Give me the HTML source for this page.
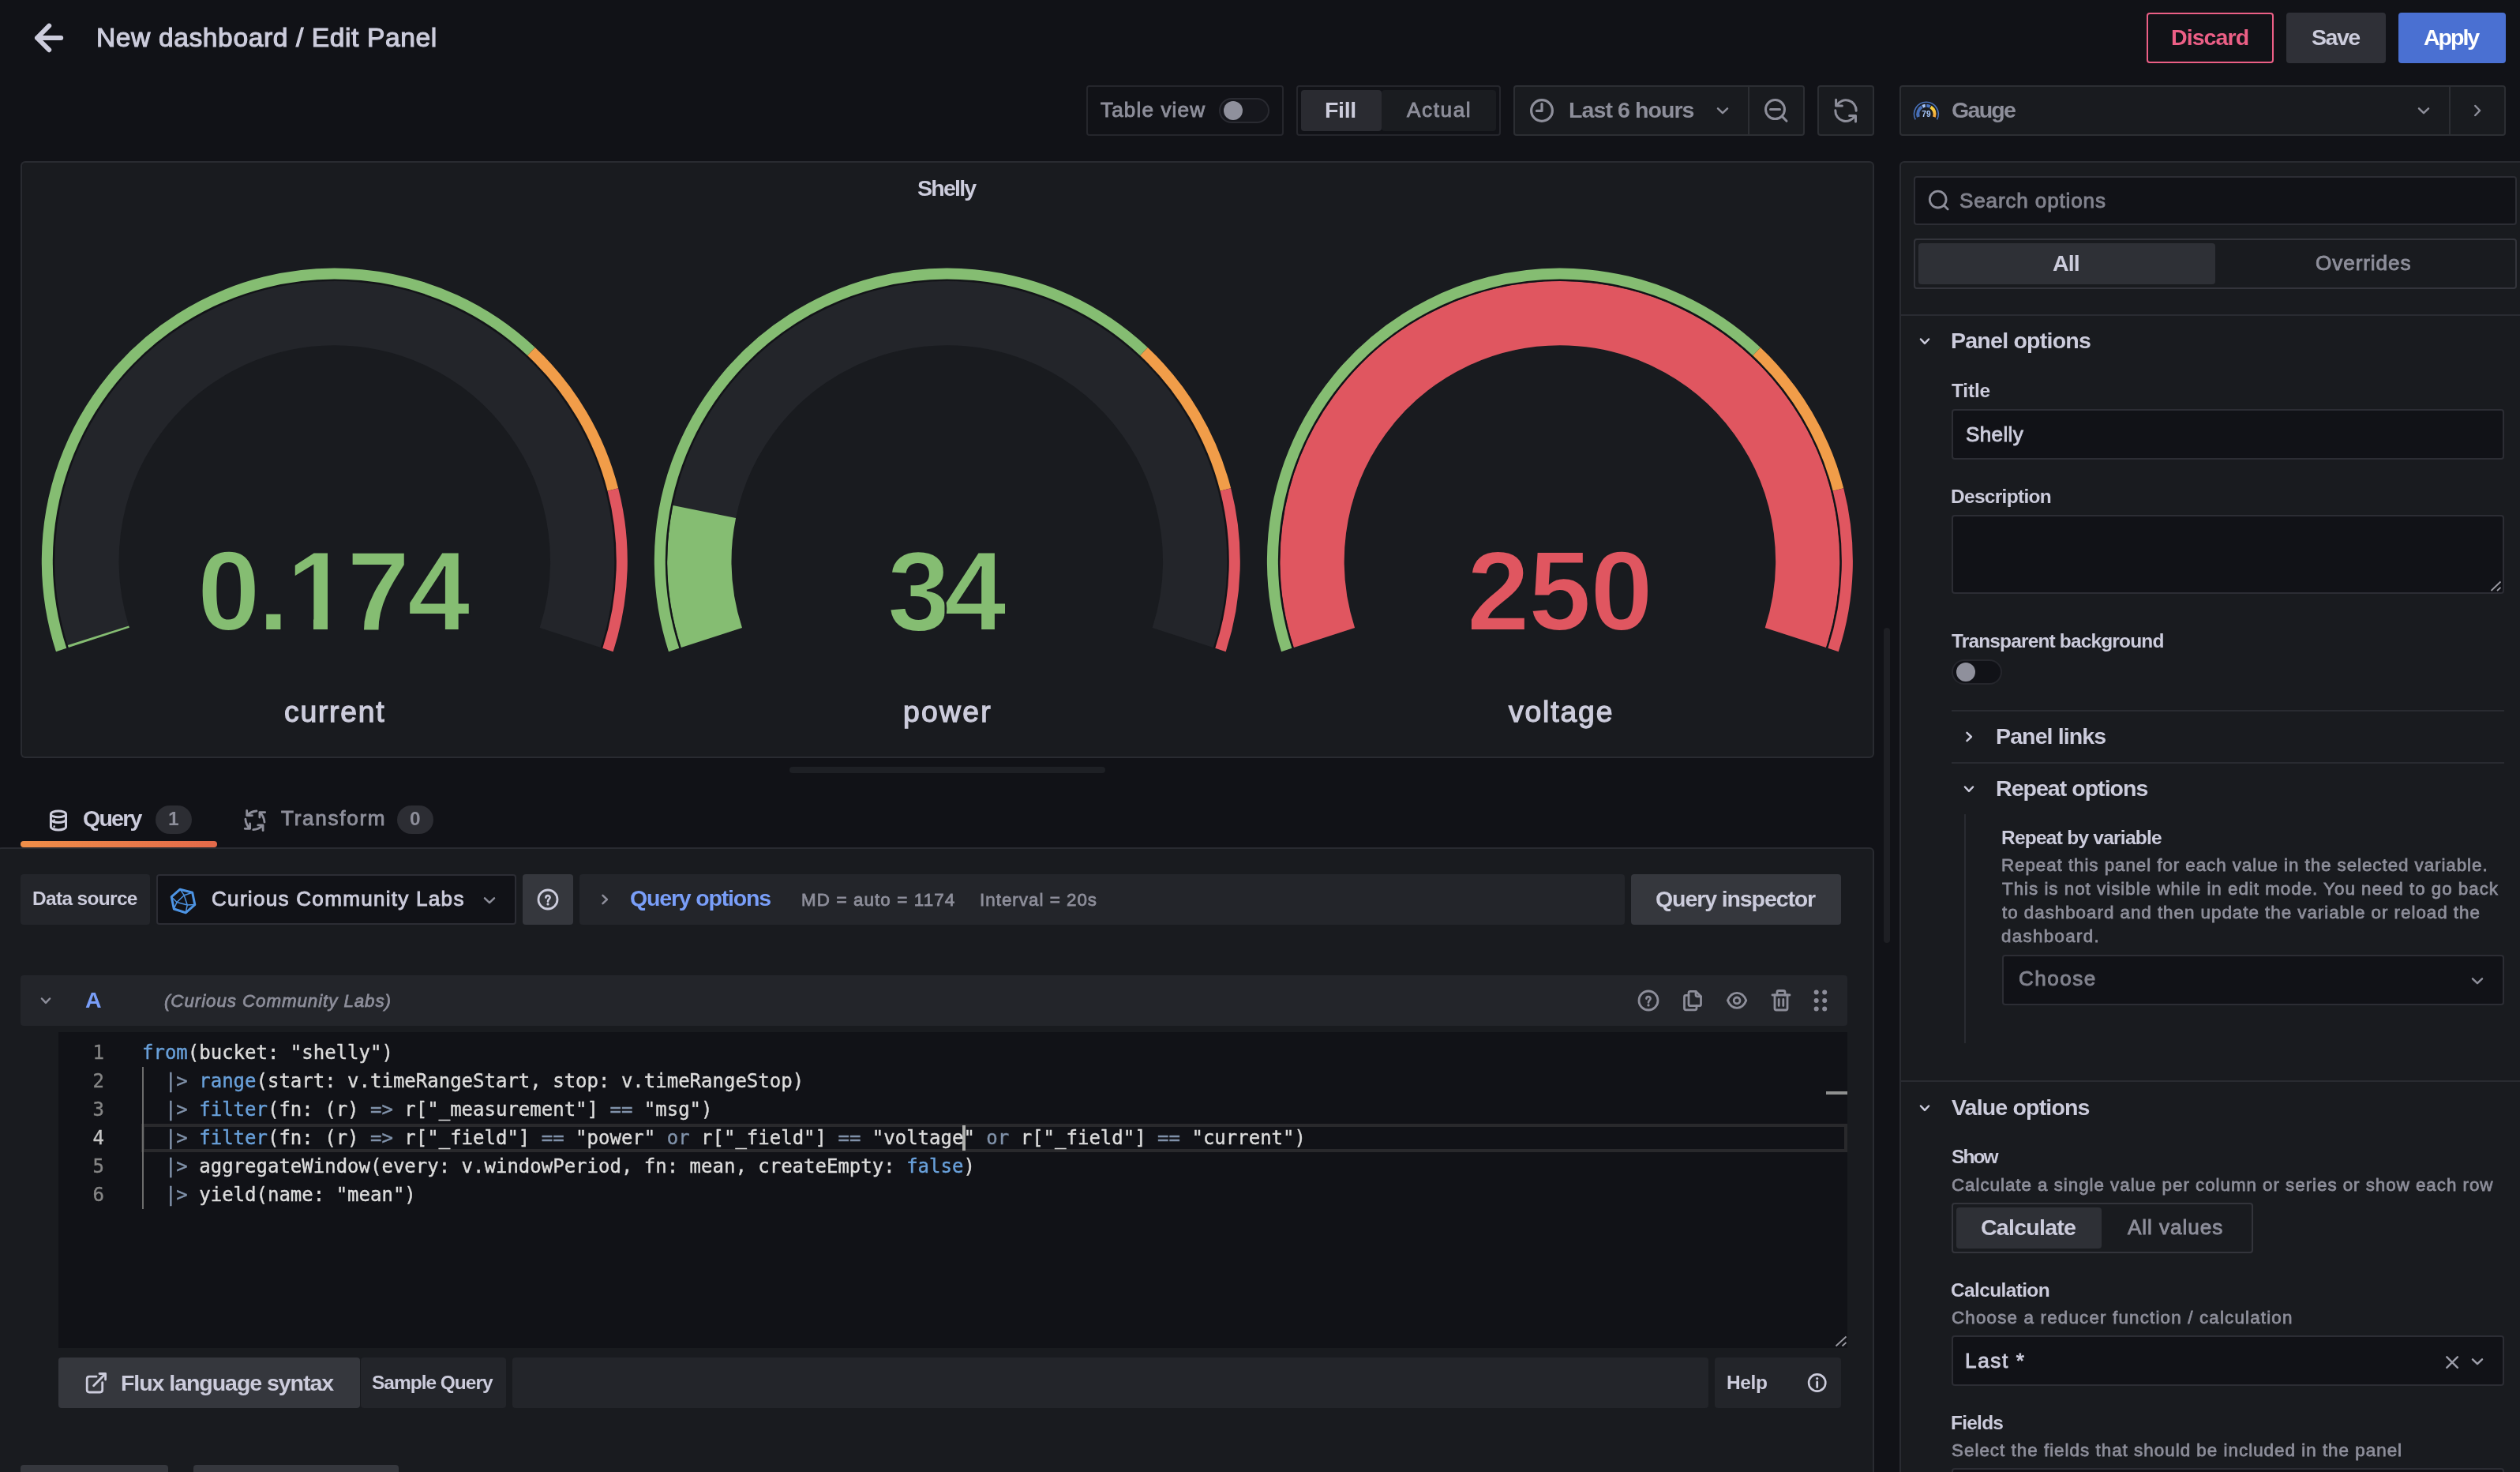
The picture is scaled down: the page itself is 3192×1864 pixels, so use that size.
<!DOCTYPE html>
<html lang="en"><head><meta charset="utf-8"><title>Edit Panel - New dashboard - Grafana</title><style>
html,body{margin:0;padding:0;}
body{width:3192px;height:1864px;overflow:hidden;background:#111217;position:relative;font-family:'Liberation Sans',Arial,sans-serif;color:#ccccdc;}
.b{position:absolute;box-sizing:border-box;}
.t{position:absolute;white-space:pre;will-change:transform;}
svg{will-change:transform;}
</style></head>
<body>
<header class="page-toolbar">
<svg class="b" style="left:36px;top:24px;" width="52" height="48" viewBox="36 24 52 48" fill="none"><path d="M62.2 32.7 L47 48 L62.2 63.2 M47 48 H77.2" stroke="#ccccdc" stroke-width="6" stroke-linecap="round" stroke-linejoin="round"/></svg>
<div class="b" style="left:2719px;top:16px;width:161px;height:64px;border:2px solid #ec5f86;border-radius:4px;"></div>
<div class="b" style="left:2896px;top:16px;width:126px;height:64px;background:#2f3037;border-radius:4px;"></div>
<div class="b" style="left:3038px;top:16px;width:136px;height:64px;background:#4a70d2;border-radius:4px;"></div>
<div class="b" style="left:1376px;top:108px;width:250px;height:64px;border:2px solid rgba(204,204,220,0.11);border-radius:4px;"></div>
<div class="b" style="left:1544px;top:124px;width:64px;height:32px;background:rgba(204,204,220,0.03);border:2px solid rgba(204,204,220,0.11);border-radius:16px;"></div>
<div class="b" style="left:1550px;top:128px;width:24px;height:24px;background:#8f909c;border-radius:12px;"></div>
<div class="b" style="left:1642px;top:108px;width:259px;height:64px;border:2px solid rgba(204,204,220,0.11);border-radius:4px;"></div>
<div class="b" style="left:1648px;top:114px;width:102px;height:52px;background:#2a2b31;border-radius:4px;"></div>
<div class="b" style="left:1750px;top:114px;width:145px;height:52px;background:#1a1c20;border-radius:4px;"></div>
<div class="b" style="left:1917px;top:108px;width:369px;height:64px;background:#191b1f;border:2px solid rgba(204,204,220,0.11);border-radius:4px;"></div>
<div class="b" style="left:2214px;top:110px;width:2px;height:60px;background:rgba(204,204,220,0.11);"></div>
<svg class="b" style="left:1936px;top:124px;" width="34" height="34" viewBox="1936 124 34 34" fill="none"><circle cx="1953" cy="140" r="13.4" stroke="#8d8e9a" stroke-width="3.2"/><path d="M1953 131.5 V140.4 H1946.4" stroke="#8d8e9a" stroke-width="3.2" stroke-linecap="round" stroke-linejoin="round"/></svg>
<svg class="b" style="left:2170px;top:128px;" width="24" height="24" viewBox="0 0 24 24" fill="none"><path d="M6.0 9.299999999999999 L12 15.1 L18.0 9.299999999999999" stroke="#8d8e9a" stroke-width="2.5" stroke-linecap="round" stroke-linejoin="round"/></svg>
<svg class="b" style="left:2230px;top:120px;" width="40" height="40" viewBox="2230 120 40 40" fill="none"><circle cx="2248.5" cy="138.6" r="12" stroke="#8d8e9a" stroke-width="3"/><path d="M2242.5 138.6 H2254.5 M2257.3 147.4 L2263 153.2" stroke="#8d8e9a" stroke-width="3" stroke-linecap="round"/></svg>
<div class="b" style="left:2302px;top:108px;width:72px;height:64px;background:#191b1f;border:2px solid rgba(204,204,220,0.11);border-radius:4px;"></div>
<svg class="b" style="left:2318px;top:120px;" width="40" height="40" viewBox="2318 120 40 40" fill="none"><g stroke="#8d8e9a" stroke-width="3" stroke-linecap="round" stroke-linejoin="round"><path d="M2326.5 133.5 A13.2 13.2 0 0 1 2351.2 140.3"/><path d="M2325.6 126.3 V134 H2333.4"/><path d="M2349.6 146.6 A13.2 13.2 0 0 1 2324.8 139.8"/><path d="M2350.5 154 V146.4 H2342.6"/></g></svg>
<div class="b" style="left:2406px;top:108px;width:768px;height:64px;background:#191b1f;border:2px solid rgba(204,204,220,0.11);border-radius:4px;"></div>
<div class="b" style="left:3102px;top:110px;width:2px;height:60px;background:rgba(204,204,220,0.11);"></div>
<svg class="b" style="left:3058px;top:128px;" width="24" height="24" viewBox="0 0 24 24" fill="none"><path d="M6.0 9.299999999999999 L12 15.1 L18.0 9.299999999999999" stroke="#8d8e9a" stroke-width="2.5" stroke-linecap="round" stroke-linejoin="round"/></svg>
<svg class="b" style="left:3126px;top:128px;" width="24" height="24" viewBox="0 0 24 24" fill="none"><path d="M9.299999999999999 6.0 L15.1 12 L9.299999999999999 18.0" stroke="#8d8e9a" stroke-width="2.5" stroke-linecap="round" stroke-linejoin="round"/></svg>
<svg class="b" style="left:2420px;top:124px;" width="40" height="32" viewBox="2420 124 40 32" fill="none"><defs><linearGradient id="gy" x1="0" y1="0" x2="0" y2="1"><stop offset="0" stop-color="#f8d640"/><stop offset="1" stop-color="#f5a33e"/></linearGradient></defs><g fill="none"><path d="M2426.27 151.45 A15.3 15.3 0 1 1 2453.53 151.45" stroke="#4870b8" stroke-width="1.6" /><path d="M2429.85 148.16 A10.7 10.7 0 0 1 2434.39 135.33" stroke="#476fb7" stroke-width="4" /><path d="M2435.21 134.88 A10.7 10.7 0 0 1 2438.78 133.86" stroke="#a4c5fb" stroke-width="4" /><path d="M2440.27 133.81 A10.7 10.7 0 0 1 2444.76 134.97" stroke="#4a74c0" stroke-width="4" /><path d="M2445.57 135.43 A10.7 10.7 0 0 1 2449.95 148.16" stroke="url(#gy)" stroke-width="4" /></g><text x="2439.9" y="148.3" font-size="10.2" font-weight="bold" fill="#a9c9fc" text-anchor="middle" font-family="Liberation Sans, sans-serif">79</text></svg>
<div class="t" style="left:121.65px;top:24.09px;font-size:33.59px;line-height:47px;color:#ccccdc;-webkit-text-stroke:1.14px #ccccdc;letter-spacing:0.600px;">New dashboard / Edit Panel</div>
<div class="t" style="left:2750.21px;top:27.40px;font-size:28.56px;line-height:40px;color:#ec5f86;font-weight:bold;letter-spacing:-0.943px;">Discard</div>
<div class="t" style="left:2928.25px;top:27.40px;font-size:28.56px;line-height:40px;color:#ccccdc;font-weight:bold;letter-spacing:-1.481px;">Save</div>
<div class="t" style="left:3069.55px;top:27.40px;font-size:28.56px;line-height:40px;color:#ffffff;font-weight:bold;letter-spacing:-2.017px;">Apply</div>
<div class="t" style="left:1393.84px;top:120.71px;font-size:26.12px;line-height:37px;color:#8d8e9a;-webkit-text-stroke:0.89px #8d8e9a;letter-spacing:1.128px;">Table view</div>
<div class="t" style="left:1678.21px;top:118.80px;font-size:28.56px;line-height:40px;color:#ccccdc;font-weight:bold;letter-spacing:-0.359px;">Fill</div>
<div class="t" style="left:1782.44px;top:120.71px;font-size:26.12px;line-height:37px;color:#8d8e9a;-webkit-text-stroke:0.89px #8d8e9a;letter-spacing:1.608px;">Actual</div>
<div class="t" style="left:1986.61px;top:119.00px;font-size:28.56px;line-height:40px;color:#8d8e9a;font-weight:bold;letter-spacing:-0.934px;">Last 6 hours</div>
<div class="t" style="left:2472.21px;top:118.90px;font-size:28.56px;line-height:40px;color:#8d8e9a;font-weight:bold;letter-spacing:-1.717px;">Gauge</div>
</header>
<main class="panel-container">
<div class="b" style="left:26px;top:204px;width:2348px;height:756px;background:#191b1f;border:2px solid rgba(204,204,220,0.095);border-radius:6px;"></div>
<svg class="b" style="left:29px;top:206px;" width="2342" height="751" viewBox="29 206 2342 751" fill="none"><path d="M125.36 807.47 A313.79999999999995 313.79999999999995 0 1 1 722.24 807.47" stroke="#23252a" stroke-width="81.19999999999999" fill="none"/><path d="M125.36 807.47 A313.79999999999995 313.79999999999995 0 0 1 124.49 804.77" stroke="#85bd72" stroke-width="81.19999999999999" fill="none"/><path d="M85.51 820.42 A355.7 355.7 0 1 1 762.09 820.42" stroke="#131418" stroke-width="2.0" fill="none"/><path d="M77.62 822.98 A364.0 364.0 0 0 1 672.98 445.16" stroke="#85bd72" stroke-width="14" fill="none"/><path d="M672.98 445.16 A364.0 364.0 0 0 1 776.36 619.98" stroke="#f19d49" stroke-width="14" fill="none"/><path d="M776.36 619.98 A364.0 364.0 0 0 1 769.98 822.98" stroke="#e05660" stroke-width="14" fill="none"/><path d="M901.36 807.47 A313.79999999999995 313.79999999999995 0 1 1 1498.24 807.47" stroke="#23252a" stroke-width="81.19999999999999" fill="none"/><path d="M901.36 807.47 A313.79999999999995 313.79999999999995 0 0 1 892.28 648.02" stroke="#85bd72" stroke-width="81.19999999999999" fill="none"/><path d="M861.51 820.42 A355.7 355.7 0 1 1 1538.09 820.42" stroke="#131418" stroke-width="2.0" fill="none"/><path d="M853.62 822.98 A364.0 364.0 0 0 1 1448.98 445.16" stroke="#85bd72" stroke-width="14" fill="none"/><path d="M1448.98 445.16 A364.0 364.0 0 0 1 1552.36 619.98" stroke="#f19d49" stroke-width="14" fill="none"/><path d="M1552.36 619.98 A364.0 364.0 0 0 1 1545.98 822.98" stroke="#e05660" stroke-width="14" fill="none"/><path d="M1677.46 807.47 A313.79999999999995 313.79999999999995 0 1 1 2274.34 807.47" stroke="#23252a" stroke-width="81.19999999999999" fill="none"/><path d="M1677.46 807.47 A313.79999999999995 313.79999999999995 0 1 1 2274.34 807.47" stroke="#e05660" stroke-width="81.19999999999999" fill="none"/><path d="M1637.61 820.42 A355.7 355.7 0 1 1 2314.19 820.42" stroke="#131418" stroke-width="2.0" fill="none"/><path d="M1629.72 822.98 A364.0 364.0 0 0 1 2225.08 445.16" stroke="#85bd72" stroke-width="14" fill="none"/><path d="M2225.08 445.16 A364.0 364.0 0 0 1 2328.46 619.98" stroke="#f19d49" stroke-width="14" fill="none"/><path d="M2328.46 619.98 A364.0 364.0 0 0 1 2322.08 822.98" stroke="#e05660" stroke-width="14" fill="none"/></svg>
<div class="t" style="left:1161.85px;top:217.60px;font-size:28.56px;line-height:40px;color:#ccccdc;font-weight:bold;letter-spacing:-1.773px;">Shelly</div>
<div class="t" style="left:249.93px;top:648.65px;font-size:143px;line-height:200px;color:#85bd72;font-weight:bold;-webkit-text-stroke:2px #191b1f;letter-spacing:-3.072px;">0.174</div>
<div class="t" style="left:1123.97px;top:648.65px;font-size:143px;line-height:200px;color:#85bd72;font-weight:bold;-webkit-text-stroke:2px #191b1f;letter-spacing:-8.233px;">34</div>
<div class="t" style="left:1857.93px;top:648.65px;font-size:143px;line-height:200px;color:#e05660;font-weight:bold;-webkit-text-stroke:2px #191b1f;letter-spacing:-1.463px;">250</div>
<div class="t" style="left:360.17px;top:875.43px;font-size:37.32px;line-height:52px;color:#ccccdc;-webkit-text-stroke:1.27px #ccccdc;letter-spacing:1.736px;">current</div>
<div class="t" style="left:1143.70px;top:875.43px;font-size:37.32px;line-height:52px;color:#ccccdc;-webkit-text-stroke:1.27px #ccccdc;letter-spacing:2.275px;">power</div>
<div class="t" style="left:1910.93px;top:875.43px;font-size:37.32px;line-height:52px;color:#ccccdc;-webkit-text-stroke:1.27px #ccccdc;letter-spacing:1.850px;">voltage</div>
<div class="b" style="left:369px;top:782px;width:28.4px;height:18px;background:#191b1f"></div>
<div class="b" style="left:415px;top:782px;width:26px;height:18px;background:#191b1f"></div>
</main>
<div class="splitters">
<div class="b" style="left:1000px;top:971px;width:400px;height:8px;background:#1e2025;border-radius:4px;"></div>
<div class="b" style="left:2386px;top:795px;width:8px;height:399px;background:#1e1f24;border-radius:4px;"></div>
</div>
<section class="query-editor">
<div class="b" style="left:-4px;top:1073px;width:2378px;height:900px;background:#191b1f;border:2px solid rgba(204,204,220,0.095);border-radius:6px;"></div>
<div class="b" style="left:26px;top:1065px;width:249px;height:8px;border-radius:4px;background:linear-gradient(90deg,#ef8e48,#e3694a);"></div>
<div class="b" style="left:197px;top:1020px;width:46px;height:36px;background:#2c2d33;border-radius:18px;"></div>
<div class="b" style="left:503px;top:1020px;width:46px;height:36px;background:#2c2d33;border-radius:18px;"></div>
<svg class="b" style="left:56px;top:1018px;" width="36" height="40" viewBox="56 1018 36 40" fill="none"><g stroke="#ccccdc" stroke-width="3" fill="none"><ellipse cx="73.97" cy="1030.9" rx="9.55" ry="3.9"/><path d="M64.42 1030.9 V1047 A9.55 3.9 0 0 0 83.52 1047 V1030.9"/><path d="M64.42 1037.6 A9.55 3.9 0 0 0 83.52 1037.6"/></g><circle cx="68.7" cy="1038.6" r="1.3" fill="#ccccdc"/><circle cx="68.7" cy="1046.6" r="1.3" fill="#ccccdc"/></svg>
<svg class="b" style="left:304px;top:1020px;" width="40" height="40" viewBox="304 1020 40 40" fill="none"><g stroke="#8d8e9a" stroke-width="2.8" fill="none" stroke-linecap="round" stroke-linejoin="round"><path d="M312.7 1026.5 V1032.7 H319.4 M313.5 1031.8 Q318 1027.6 325 1027"/><path d="M335.7 1028.6 H328.9 V1035 M329.8 1029.5 Q334.4 1034 335 1041.2"/><path d="M333.1 1051.7 V1044.9 H326.8 M332.4 1045.8 Q327.5 1050.2 320.7 1050.7"/><path d="M310.2 1049.3 H316.6 V1042.9 M315.8 1048.5 Q311.4 1043.8 310.9 1037.1"/></g></svg>
<div class="b" style="left:26px;top:1107px;width:164px;height:64px;background:#23252a;border-radius:4px;"></div>
<div class="b" style="left:198px;top:1107px;width:456px;height:64px;background:#111217;border:2px solid rgba(204,204,220,0.15);border-radius:4px;"></div>
<svg class="b" style="left:608px;top:1128px;" width="24" height="24" viewBox="0 0 24 24" fill="none"><path d="M6.0 9.299999999999999 L12 15.1 L18.0 9.299999999999999" stroke="#8d8e9a" stroke-width="2.5" stroke-linecap="round" stroke-linejoin="round"/></svg>
<svg class="b" style="left:210px;top:1118px;" width="44" height="44" viewBox="210 1118 44 44" fill="none"><g stroke="#4d94e4" fill="none" stroke-linejoin="round"><path d="M228.1 1126.2 L243.7 1130.3 L246.8 1145.6 L235.2 1155.8 L220.3 1151 L217.2 1135.7 Z" stroke-width="3"/><path d="M228.1 1126.2 L233.2 1133.7 L243.7 1130.3 M217.2 1135.7 L224 1142.5 L220.3 1151 M246.8 1145.6 L237.25 1145.9 L235.2 1155.8 M233.2 1133.7 L224 1142.5 L237.25 1145.9 Z" stroke-width="1.5"/></g></svg>
<div class="b" style="left:662px;top:1107px;width:64px;height:64px;background:#35373d;border-radius:4px;"></div>
<svg class="b" style="left:678px;top:1123px;" width="32" height="32" viewBox="0 0 32 32" fill="none"><circle cx="16" cy="16" r="12" stroke="#ccccdc" stroke-width="2.8"/><path d="M13.4 13.6 C13.4 10.3 18.6 10.3 18.6 13.5 C18.6 15.7 16 15.7 16 18.4" stroke="#ccccdc" stroke-width="2.6" stroke-linecap="round" fill="none"/><circle cx="16" cy="21.9" r="1.6" fill="#ccccdc"/></svg>
<div class="b" style="left:734px;top:1107px;width:1324px;height:64px;background:#23252a;border-radius:4px;"></div>
<svg class="b" style="left:754px;top:1127px;" width="24" height="24" viewBox="0 0 24 24" fill="none"><path d="M9.475 6.95 L14.924999999999999 12 L9.475 17.05" stroke="#8d8e9a" stroke-width="2.5" stroke-linecap="round" stroke-linejoin="round"/></svg>
<div class="b" style="left:2066px;top:1107px;width:266px;height:64px;background:#35373d;border-radius:4px;"></div>
<div class="b" style="left:26px;top:1235px;width:2314px;height:64px;background:#23252a;border-radius:4px;"></div>
<svg class="b" style="left:46px;top:1255px;" width="24" height="24" viewBox="0 0 24 24" fill="none"><path d="M6.95 9.475 L12 14.924999999999999 L17.05 9.475" stroke="#8d8e9a" stroke-width="2.5" stroke-linecap="round" stroke-linejoin="round"/></svg>
<svg class="b" style="left:2072px;top:1251px;" width="32" height="32" viewBox="0 0 32 32" fill="none"><circle cx="16" cy="16" r="12" stroke="#8d8e9a" stroke-width="2.8"/><path d="M13.4 13.6 C13.4 10.3 18.6 10.3 18.6 13.5 C18.6 15.7 16 15.7 16 18.4" stroke="#8d8e9a" stroke-width="2.6" stroke-linecap="round" fill="none"/><circle cx="16" cy="21.9" r="1.6" fill="#8d8e9a"/></svg>
<svg class="b" style="left:2128px;top:1249px;" width="32" height="34" viewBox="2128 1249 32 34" fill="none"><g stroke="#8d8e9a" stroke-width="2.8" fill="none" stroke-linejoin="round" stroke-linecap="round"><path d="M2139 1257.3 Q2139 1255.3 2141 1255.3 H2148 L2154.5 1261.8 V1271.7 Q2154.5 1273.7 2152.5 1273.7 H2141 Q2139 1273.7 2139 1271.7 Z"/><path d="M2148 1255.3 V1259.8 Q2148 1261.8 2150 1261.8 H2154.5"/><path d="M2139 1260.4 H2135.5 Q2133.5 1260.4 2133.5 1262.4 V1276.8 Q2133.5 1278.8 2135.5 1278.8 H2147 Q2149 1278.8 2149 1276.8 V1273.7"/></g></svg>
<svg class="b" style="left:2184px;top:1251px;" width="32" height="32" viewBox="2184 1251 32 32" fill="none"><g stroke="#8d8e9a" stroke-width="2.8" fill="none"><path d="M2188.4 1266.9 C2193.5 1254.3 2206.7 1254.3 2211.8 1266.9 C2206.7 1279.5 2193.5 1279.5 2188.4 1266.9 Z" stroke-linejoin="round"/><circle cx="2200.1" cy="1266.9" r="3.9"/></g></svg>
<svg class="b" style="left:2240px;top:1251px;" width="32" height="32" viewBox="2240 1251 32 32" fill="none"><g stroke="#8d8e9a" stroke-width="2.8" fill="none" stroke-linecap="round" stroke-linejoin="round"><path d="M2245 1260 H2267"/><path d="M2251 1260 V1256.5 Q2251 1254.5 2253 1254.5 H2259 Q2261 1254.5 2261 1256.5 V1260"/><path d="M2248 1260 V1277 Q2248 1279 2250 1279 H2262 Q2264 1279 2264 1277 V1260"/><path d="M2253.2 1265.5 V1273.5 M2258.8 1265.5 V1273.5"/></g></svg>
<svg class="b" style="left:2290px;top:1251px;" width="32" height="32" viewBox="2290 1251 32 32" fill="none"><circle cx="2300.7" cy="1256.5" r="3" fill="#8d8e9a"/><circle cx="2300.7" cy="1267" r="3" fill="#8d8e9a"/><circle cx="2300.7" cy="1277.5" r="3" fill="#8d8e9a"/><circle cx="2311.2" cy="1256.5" r="3" fill="#8d8e9a"/><circle cx="2311.2" cy="1267" r="3" fill="#8d8e9a"/><circle cx="2311.2" cy="1277.5" r="3" fill="#8d8e9a"/></svg>
<div class="b" style="left:74px;top:1307px;width:2266px;height:400px;background:#111217;"></div>
<div class="b" style="left:179px;top:1423px;width:2161px;height:36px;border:4px solid #29292c;"></div>
<div class="b" style="left:180px;top:1351px;width:2px;height:180px;background:#6c6c6c;"></div>
<div class="b" style="left:2313px;top:1382px;width:27px;height:4px;background:#8f9090;"></div>
<div class="b" style="left:1219px;top:1425px;width:4px;height:32px;background:#aeafad;"></div>
<svg class="b" style="left:2322px;top:1690px;" width="18" height="17" viewBox="2322 1690 18 17" fill="none"><path d="M2325.5 1704.5 L2338.5 1692.5 M2333.5 1704.5 L2338.5 1700" stroke="#9a9aa2" stroke-width="1.8"/></svg>
<div class="t" style="left:180px;top:1315px;font-family:'DejaVu Sans Mono','Liberation Mono',monospace;font-size:24px;line-height:36px;-webkit-text-stroke-width:0.4px;"><span style="color:#69a0da">from</span><span style="color:#dcdcdc">(bucket: "shelly")</span></div>
<div class="t" style="left:60px;width:72px;text-align:right;top:1315px;font-family:'DejaVu Sans Mono','Liberation Mono',monospace;font-size:24px;line-height:36px;-webkit-text-stroke-width:0.4px;color:#858585">1</div>
<div class="t" style="left:180px;top:1351px;font-family:'DejaVu Sans Mono','Liberation Mono',monospace;font-size:24px;line-height:36px;-webkit-text-stroke-width:0.4px;"><span style="color:#dcdcdc">  </span><span style="color:#8092aa">|&gt;</span><span style="color:#dcdcdc"> </span><span style="color:#69a0da">range</span><span style="color:#dcdcdc">(start: v.timeRangeStart, stop: v.timeRangeStop)</span></div>
<div class="t" style="left:60px;width:72px;text-align:right;top:1351px;font-family:'DejaVu Sans Mono','Liberation Mono',monospace;font-size:24px;line-height:36px;-webkit-text-stroke-width:0.4px;color:#858585">2</div>
<div class="t" style="left:180px;top:1387px;font-family:'DejaVu Sans Mono','Liberation Mono',monospace;font-size:24px;line-height:36px;-webkit-text-stroke-width:0.4px;"><span style="color:#dcdcdc">  </span><span style="color:#8092aa">|&gt;</span><span style="color:#dcdcdc"> </span><span style="color:#69a0da">filter</span><span style="color:#dcdcdc">(fn: (r) </span><span style="color:#8092aa">=&gt;</span><span style="color:#dcdcdc"> r["_measurement"] </span><span style="color:#8092aa">==</span><span style="color:#dcdcdc"> "msg")</span></div>
<div class="t" style="left:60px;width:72px;text-align:right;top:1387px;font-family:'DejaVu Sans Mono','Liberation Mono',monospace;font-size:24px;line-height:36px;-webkit-text-stroke-width:0.4px;color:#858585">3</div>
<div class="t" style="left:180px;top:1423px;font-family:'DejaVu Sans Mono','Liberation Mono',monospace;font-size:24px;line-height:36px;-webkit-text-stroke-width:0.4px;"><span style="color:#dcdcdc">  </span><span style="color:#8092aa">|&gt;</span><span style="color:#dcdcdc"> </span><span style="color:#69a0da">filter</span><span style="color:#dcdcdc">(fn: (r) </span><span style="color:#8092aa">=&gt;</span><span style="color:#dcdcdc"> r["_field"] </span><span style="color:#8092aa">==</span><span style="color:#dcdcdc"> "power" </span><span style="color:#8092aa">or</span><span style="color:#dcdcdc"> r["_field"] </span><span style="color:#8092aa">==</span><span style="color:#dcdcdc"> "voltage" </span><span style="color:#8092aa">or</span><span style="color:#dcdcdc"> r["_field"] </span><span style="color:#8092aa">==</span><span style="color:#dcdcdc"> "current")</span></div>
<div class="t" style="left:60px;width:72px;text-align:right;top:1423px;font-family:'DejaVu Sans Mono','Liberation Mono',monospace;font-size:24px;line-height:36px;-webkit-text-stroke-width:0.4px;color:#c6c6c6">4</div>
<div class="t" style="left:180px;top:1459px;font-family:'DejaVu Sans Mono','Liberation Mono',monospace;font-size:24px;line-height:36px;-webkit-text-stroke-width:0.4px;"><span style="color:#dcdcdc">  </span><span style="color:#8092aa">|&gt;</span><span style="color:#dcdcdc"> aggregateWindow(every: v.windowPeriod, fn: mean, createEmpty: </span><span style="color:#69a0da">false</span><span style="color:#dcdcdc">)</span></div>
<div class="t" style="left:60px;width:72px;text-align:right;top:1459px;font-family:'DejaVu Sans Mono','Liberation Mono',monospace;font-size:24px;line-height:36px;-webkit-text-stroke-width:0.4px;color:#858585">5</div>
<div class="t" style="left:180px;top:1495px;font-family:'DejaVu Sans Mono','Liberation Mono',monospace;font-size:24px;line-height:36px;-webkit-text-stroke-width:0.4px;"><span style="color:#dcdcdc">  </span><span style="color:#8092aa">|&gt;</span><span style="color:#dcdcdc"> yield(name: "mean")</span></div>
<div class="t" style="left:60px;width:72px;text-align:right;top:1495px;font-family:'DejaVu Sans Mono','Liberation Mono',monospace;font-size:24px;line-height:36px;-webkit-text-stroke-width:0.4px;color:#858585">6</div>
<div class="b" style="left:74px;top:1719px;width:382px;height:64px;background:#35373d;border-radius:4px;"></div>
<svg class="b" style="left:104px;top:1732px;" width="36" height="36" viewBox="104 1732 36 36" fill="none"><g stroke="#ccccdc" stroke-width="2.8" fill="none" stroke-linecap="round" stroke-linejoin="round"><path d="M122 1743.2 H113.2 Q110.2 1743.2 110.2 1746.2 V1760 Q110.2 1763 113.2 1763 H126.7 Q129.7 1763 129.7 1760 V1750.6"/><path d="M126 1739.5 H133.6 V1747 M133.6 1739.5 L118.6 1754.7"/></g></svg>
<div class="b" style="left:457px;top:1719px;width:184px;height:64px;background:#23252a;border-radius:4px;"></div>
<div class="b" style="left:649px;top:1719px;width:1515px;height:64px;background:#23252a;border-radius:4px;"></div>
<div class="b" style="left:2172px;top:1719px;width:160px;height:64px;background:#23252a;border-radius:4px;"></div>
<svg class="b" style="left:2286px;top:1735px;" width="32" height="32" viewBox="2286 1735 32 32" fill="none"><circle cx="2301.7" cy="1751" r="10.6" stroke="#ccccdc" stroke-width="2.6"/><path d="M2301.7 1750 V1756.5" stroke="#ccccdc" stroke-width="2.8" stroke-linecap="round"/><circle cx="2301.7" cy="1745.6" r="1.6" fill="#ccccdc"/></svg>
<div class="b" style="left:26px;top:1855px;width:187px;height:40px;background:#35373d;border-radius:4px;"></div>
<div class="b" style="left:245px;top:1855px;width:260px;height:40px;background:#35373d;border-radius:4px;"></div>
<div class="t" style="left:105.41px;top:1016.10px;font-size:28.56px;line-height:40px;color:#ccccdc;font-weight:bold;letter-spacing:-1.783px;">Query</div>
<div class="t" style="left:212.65px;top:1020.02px;font-size:24.48px;line-height:34px;color:#8d8e9a;font-weight:bold;">1</div>
<div class="t" style="left:355.64px;top:1018.01px;font-size:26.12px;line-height:37px;color:#8d8e9a;-webkit-text-stroke:0.89px #8d8e9a;letter-spacing:1.692px;">Transform</div>
<div class="t" style="left:519.10px;top:1020.02px;font-size:24.48px;line-height:34px;color:#8d8e9a;font-weight:bold;">0</div>
<div class="t" style="left:40.60px;top:1121.22px;font-size:24.48px;line-height:34px;color:#ccccdc;font-weight:bold;letter-spacing:-0.662px;">Data source</div>
<div class="t" style="left:268.02px;top:1119.81px;font-size:26.12px;line-height:37px;color:#ccccdc;-webkit-text-stroke:0.89px #ccccdc;letter-spacing:1.253px;">Curious Community Labs</div>
<div class="t" style="left:797.51px;top:1117.40px;font-size:28.56px;line-height:40px;color:#799ef8;font-weight:bold;letter-spacing:-1.195px;">Query options</div>
<div class="t" style="left:1015.38px;top:1123.66px;font-size:22.39px;line-height:31px;color:#8d8e9a;-webkit-text-stroke:0.76px #8d8e9a;letter-spacing:1.121px;">MD = auto = 1174</div>
<div class="t" style="left:1240.58px;top:1123.66px;font-size:22.39px;line-height:31px;color:#8d8e9a;-webkit-text-stroke:0.76px #8d8e9a;letter-spacing:1.008px;">Interval = 20s</div>
<div class="t" style="left:2096.81px;top:1117.80px;font-size:28.56px;line-height:40px;color:#ccccdc;font-weight:bold;letter-spacing:-1.123px;">Query inspector</div>
<div class="t" style="left:107.55px;top:1245.70px;font-size:28.56px;line-height:40px;color:#799ef8;font-weight:bold;">A</div>
<div class="t" style="left:208.28px;top:1251.96px;font-size:22.39px;line-height:31px;color:#8d8e9a;-webkit-text-stroke:0.76px #8d8e9a;font-style:italic;letter-spacing:0.910px;">(Curious Community Labs)</div>
<div class="t" style="left:152.81px;top:1730.70px;font-size:28.56px;line-height:40px;color:#ccccdc;font-weight:bold;letter-spacing:-1.065px;">Flux language syntax</div>
<div class="t" style="left:471.30px;top:1733.52px;font-size:24.48px;line-height:34px;color:#ccccdc;font-weight:bold;letter-spacing:-1.001px;">Sample Query</div>
<div class="t" style="left:2186.90px;top:1733.82px;font-size:24.48px;line-height:34px;color:#ccccdc;font-weight:bold;letter-spacing:-0.331px;">Help</div>
</section>
<aside class="options-pane">
<div class="b" style="left:2406px;top:204px;width:800px;height:1700px;background:#191b1f;border:2px solid rgba(204,204,220,0.095);border-radius:6px;"></div>
<div class="b" style="left:2424px;top:223px;width:764px;height:62px;background:#111217;border:2px solid rgba(204,204,220,0.15);border-radius:4px;"></div>
<svg class="b" style="left:2438px;top:238px;" width="34" height="34" viewBox="2438 238 34 34" fill="none"><circle cx="2454.7" cy="252.6" r="10.4" stroke="#8d8e9a" stroke-width="2.8"/><path d="M2462.2 260.1 L2467.2 265.1" stroke="#8d8e9a" stroke-width="2.8" stroke-linecap="round"/></svg>
<div class="b" style="left:2424px;top:302px;width:764px;height:64px;border:2px solid rgba(204,204,220,0.15);border-radius:4px;"></div>
<div class="b" style="left:2430px;top:308px;width:376px;height:52px;background:#2e3036;border-radius:4px;"></div>
<div class="b" style="left:2408px;top:398px;width:790px;height:2px;background:rgba(204,204,220,0.095);"></div>
<svg class="b" style="left:2425.7px;top:419.5px;" width="24" height="24" viewBox="0 0 24 24" fill="none"><path d="M6.95 9.475 L12 14.924999999999999 L17.05 9.475" stroke="#ccccdc" stroke-width="2.5" stroke-linecap="round" stroke-linejoin="round"/></svg>
<div class="b" style="left:2472px;top:518px;width:700px;height:64px;background:#111217;border:2px solid rgba(204,204,220,0.15);border-radius:4px;"></div>
<div class="b" style="left:2472px;top:652px;width:700px;height:100px;background:#111217;border:2px solid rgba(204,204,220,0.15);border-radius:4px;"></div>
<svg class="b" style="left:3152px;top:734px;" width="18" height="17" viewBox="3152 734 18 17" fill="none"><path d="M3155.5 748 L3167.5 736.5 M3163 748 L3167.5 743.8" stroke="#9a9aa2" stroke-width="1.8"/></svg>
<div class="b" style="left:2472px;top:835px;width:64px;height:32px;background:rgba(17,18,23,1);border:2px solid rgba(204,204,220,0.11);border-radius:16px;"></div>
<div class="b" style="left:2478px;top:839px;width:24px;height:24px;background:#8f909c;border-radius:12px;"></div>
<div class="b" style="left:2472px;top:899px;width:700px;height:2px;background:rgba(204,204,220,0.095);"></div>
<svg class="b" style="left:2482px;top:921px;" width="24" height="24" viewBox="0 0 24 24" fill="none"><path d="M9.475 6.95 L14.924999999999999 12 L9.475 17.05" stroke="#ccccdc" stroke-width="2.5" stroke-linecap="round" stroke-linejoin="round"/></svg>
<div class="b" style="left:2472px;top:965px;width:700px;height:2px;background:rgba(204,204,220,0.095);"></div>
<svg class="b" style="left:2481.7px;top:987px;" width="24" height="24" viewBox="0 0 24 24" fill="none"><path d="M6.95 9.475 L12 14.924999999999999 L17.05 9.475" stroke="#ccccdc" stroke-width="2.5" stroke-linecap="round" stroke-linejoin="round"/></svg>
<div class="b" style="left:2488px;top:1031px;width:2px;height:290px;background:rgba(204,204,220,0.095);"></div>
<div class="b" style="left:2536px;top:1209px;width:636px;height:64px;background:#111217;border:2px solid rgba(204,204,220,0.15);border-radius:4px;"></div>
<svg class="b" style="left:3125.9px;top:1230px;" width="24" height="24" viewBox="0 0 24 24" fill="none"><path d="M6.0 9.299999999999999 L12 15.1 L18.0 9.299999999999999" stroke="#8d8e9a" stroke-width="2.5" stroke-linecap="round" stroke-linejoin="round"/></svg>
<div class="b" style="left:2408px;top:1368px;width:790px;height:2px;background:rgba(204,204,220,0.095);"></div>
<svg class="b" style="left:2425.7px;top:1391px;" width="24" height="24" viewBox="0 0 24 24" fill="none"><path d="M6.95 9.475 L12 14.924999999999999 L17.05 9.475" stroke="#ccccdc" stroke-width="2.5" stroke-linecap="round" stroke-linejoin="round"/></svg>
<div class="b" style="left:2472px;top:1523px;width:382px;height:64px;border:2px solid rgba(204,204,220,0.15);border-radius:4px;"></div>
<div class="b" style="left:2478px;top:1529px;width:184px;height:52px;background:#2e3036;border-radius:4px;"></div>
<div class="b" style="left:2472px;top:1691px;width:700px;height:64px;background:#111217;border:2px solid rgba(204,204,220,0.15);border-radius:4px;"></div>
<svg class="b" style="left:3094px;top:1713px;" width="24" height="24" viewBox="3094 1713 24 24" fill="none"><path d="M3099.3 1718.3 L3112.9 1731.9 M3112.9 1718.3 L3099.3 1731.9" stroke="#9d9eaa" stroke-width="2.4" stroke-linecap="round"/></svg>
<svg class="b" style="left:3125.9px;top:1712.4px;" width="24" height="24" viewBox="0 0 24 24" fill="none"><path d="M6.0 9.299999999999999 L12 15.1 L18.0 9.299999999999999" stroke="#9d9eaa" stroke-width="2.5" stroke-linecap="round" stroke-linejoin="round"/></svg>
<div class="b" style="left:2472px;top:1859px;width:700px;height:64px;background:#111217;border:2px solid rgba(204,204,220,0.15);border-radius:4px;"></div>
<div class="t" style="left:2482.43px;top:236.01px;font-size:26.12px;line-height:37px;color:#81828d;-webkit-text-stroke:0.89px #81828d;letter-spacing:0.831px;">Search options</div>
<div class="t" style="left:2600.45px;top:313.00px;font-size:28.56px;line-height:40px;color:#ccccdc;font-weight:bold;letter-spacing:-0.881px;">All</div>
<div class="t" style="left:2933.22px;top:314.71px;font-size:26.12px;line-height:37px;color:#8d8e9a;-webkit-text-stroke:0.89px #8d8e9a;letter-spacing:0.917px;">Overrides</div>
<div class="t" style="left:2470.51px;top:411.10px;font-size:28.56px;line-height:40px;color:#ccccdc;font-weight:bold;letter-spacing:-0.775px;">Panel options</div>
<div class="t" style="left:2472.10px;top:477.62px;font-size:24.48px;line-height:34px;color:#ccccdc;font-weight:bold;letter-spacing:-0.191px;">Title</div>
<div class="t" style="left:2490.13px;top:531.71px;font-size:26.12px;line-height:37px;color:#ccccdc;-webkit-text-stroke:0.89px #ccccdc;letter-spacing:0.337px;">Shelly</div>
<div class="t" style="left:2470.70px;top:612.12px;font-size:24.48px;line-height:34px;color:#ccccdc;font-weight:bold;letter-spacing:-0.691px;">Description</div>
<div class="t" style="left:2472.10px;top:794.52px;font-size:24.48px;line-height:34px;color:#ccccdc;font-weight:bold;letter-spacing:-0.836px;">Transparent background</div>
<div class="t" style="left:2527.71px;top:912.10px;font-size:28.56px;line-height:40px;color:#ccccdc;font-weight:bold;letter-spacing:-0.907px;">Panel links</div>
<div class="t" style="left:2527.71px;top:978.10px;font-size:28.56px;line-height:40px;color:#ccccdc;font-weight:bold;letter-spacing:-0.987px;">Repeat options</div>
<div class="t" style="left:2535.10px;top:1044.12px;font-size:24.48px;line-height:34px;color:#ccccdc;font-weight:bold;letter-spacing:-0.742px;">Repeat by variable</div>
<div class="t" style="left:2534.58px;top:1080.16px;font-size:22.39px;line-height:31px;color:#8d8e9a;-webkit-text-stroke:0.76px #8d8e9a;letter-spacing:0.937px;">Repeat this panel for each value in the selected variable.</div>
<div class="t" style="left:2535.88px;top:1109.96px;font-size:22.39px;line-height:31px;color:#8d8e9a;-webkit-text-stroke:0.76px #8d8e9a;letter-spacing:0.985px;">This is not visible while in edit mode. You need to go back</div>
<div class="t" style="left:2536.08px;top:1139.86px;font-size:22.39px;line-height:31px;color:#8d8e9a;-webkit-text-stroke:0.76px #8d8e9a;letter-spacing:0.973px;">to dashboard and then update the variable or reload the</div>
<div class="t" style="left:2535.48px;top:1169.76px;font-size:22.39px;line-height:31px;color:#8d8e9a;-webkit-text-stroke:0.76px #8d8e9a;letter-spacing:1.314px;">dashboard.</div>
<div class="t" style="left:2557.22px;top:1221.01px;font-size:26.12px;line-height:37px;color:#81828d;-webkit-text-stroke:0.89px #81828d;letter-spacing:1.473px;">Choose</div>
<div class="t" style="left:2472.30px;top:1381.90px;font-size:28.56px;line-height:40px;color:#ccccdc;font-weight:bold;letter-spacing:-0.843px;">Value options</div>
<div class="t" style="left:2471.60px;top:1448.12px;font-size:24.48px;line-height:34px;color:#ccccdc;font-weight:bold;letter-spacing:-1.945px;">Show</div>
<div class="t" style="left:2471.58px;top:1484.66px;font-size:22.39px;line-height:31px;color:#8d8e9a;-webkit-text-stroke:0.76px #8d8e9a;letter-spacing:0.962px;">Calculate a single value per column or series or show each row</div>
<div class="t" style="left:2509.11px;top:1534.30px;font-size:28.56px;line-height:40px;color:#ccccdc;font-weight:bold;letter-spacing:-0.748px;">Calculate</div>
<div class="t" style="left:2694.94px;top:1536.21px;font-size:26.12px;line-height:37px;color:#8d8e9a;-webkit-text-stroke:0.89px #8d8e9a;letter-spacing:0.938px;">All values</div>
<div class="t" style="left:2471.30px;top:1617.02px;font-size:24.48px;line-height:34px;color:#ccccdc;font-weight:bold;letter-spacing:-0.628px;">Calculation</div>
<div class="t" style="left:2471.58px;top:1652.76px;font-size:22.39px;line-height:31px;color:#8d8e9a;-webkit-text-stroke:0.76px #8d8e9a;letter-spacing:1.174px;">Choose a reducer function / calculation</div>
<div class="t" style="left:2488.90px;top:1704.71px;font-size:26.12px;line-height:37px;color:#ccccdc;-webkit-text-stroke:0.89px #ccccdc;letter-spacing:1.646px;">Last *</div>
<div class="t" style="left:2471.20px;top:1784.52px;font-size:24.48px;line-height:34px;color:#ccccdc;font-weight:bold;letter-spacing:-0.745px;">Fields</div>
<div class="t" style="left:2471.68px;top:1820.66px;font-size:22.39px;line-height:31px;color:#8d8e9a;-webkit-text-stroke:0.76px #8d8e9a;letter-spacing:1.016px;">Select the fields that should be included in the panel</div>
</aside>
</body></html>
